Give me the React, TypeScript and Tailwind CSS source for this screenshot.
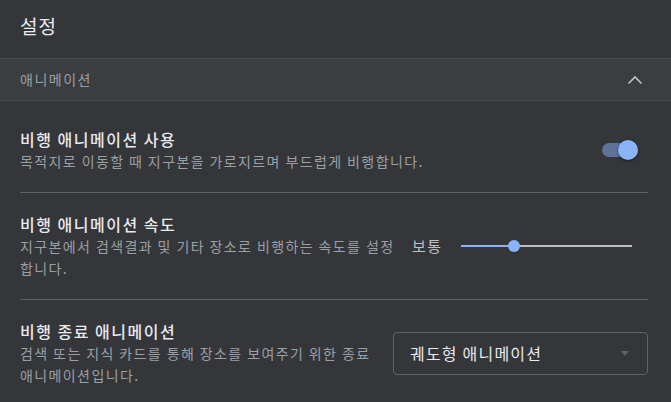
import React from "react";

// Chrome-like dark settings page: 애니메이션 section

const font = { fontFamily: '"Noto Sans CJK KR", "Noto Sans", sans-serif' };

function Toggle() {
  return (
    <div className="relative h-[20px] w-[36px] mr-[10px]">
      <div className="absolute left-0 top-[3px] h-[14px] w-[32px] rounded-full bg-[#5d7398]" />
      <div className="absolute right-0 top-0 h-[20px] w-[20px] rounded-full bg-[#8ab4f8] shadow-[0_1px_3px_rgba(0,0,0,0.5)]" />
    </div>
  );
}

function Slider() {
  return (
    <div className="relative h-[12px] w-[171px]">
      <div className="absolute left-0 right-0 top-[5px] h-[2px] bg-[#bdbdbd]" />
      <div className="absolute left-0 top-[5px] h-[2px] w-[53px] bg-[#8ab4f8]" />
      <div className="absolute left-[47px] top-0 h-[12px] w-[12px] rounded-full bg-[#8ab4f8]" />
    </div>
  );
}

const title = "text-[16px] font-medium leading-[22px] tracking-[1.5px] text-[#e8eaed]";
const desc = "text-[14px] leading-[22px] tracking-[1.4px] text-[#9aa0a6] break-keep";

export default function App() {
  return (
    <div className="h-[402px] w-[671px] overflow-hidden bg-[#35363a]" style={font}>
      {/* page title */}
      <div className="flex h-[58px] items-center px-[20px] pb-[6px]">
        <h1 className="text-[19px] tracking-[1px] text-[#e8eaed]">설정</h1>
      </div>

      {/* section header */}
      <div className="flex h-[43px] items-center justify-between border-y border-[#4a4b4f] bg-[#3c3d41] pl-[20px] pr-[28px]">
        <span className="text-[14px] tracking-[1.5px] text-[#9aa0a6]">애니메이션</span>
        <svg width="16" height="10" viewBox="0 0 16 10" fill="none">
          <path d="M1.5 8.5 L8 2 L14.5 8.5" stroke="#bdc1c6" strokeWidth="1.6" />
        </svg>
      </div>

      <div className="pl-[20px] pr-[23px] pt-[7px]">
        {/* row 1 */}
        <div className="flex items-center border-b border-[#5f6368] py-[20px]">
          <div className="flex-1">
            <div className={title}>비행 애니메이션 사용</div>
            <div className={desc}>목적지로 이동할 때 지구본을 가로지르며 부드럽게 비행합니다.</div>
          </div>
          <Toggle />
        </div>

        {/* row 2 */}
        <div className="flex items-center border-b border-[#5f6368] py-[20px]">
          <div className="w-[377px] shrink-0">
            <div className={title}>비행 애니메이션 속도</div>
            <div className={desc}>지구본에서 검색결과 및 기타 장소로 비행하는 속도를 설정 합니다.</div>
          </div>
          <div className="ml-[15px] flex items-center gap-[18px]">
            <span className="text-[15px] tracking-[1.5px] text-[#bdc1c6]">보통</span>
            <Slider />
          </div>
        </div>

        {/* row 3 */}
        <div className="flex items-center py-[20px]">
          <div className="w-[373px] shrink-0">
            <div className={title}>비행 종료 애니메이션</div>
            <div className={desc}>검색 또는 지식 카드를 통해 장소를 보여주기 위한 종료 애니메이션입니다.</div>
          </div>
          <div className="flex h-[43px] flex-1 items-center justify-between rounded-[4px] border border-[#5f6368] pl-[16px] pr-[18px]">
            <span className="text-[16px] tracking-[1.2px] text-[#e8eaed]">궤도형 애니메이션</span>
            <svg width="8" height="5" viewBox="0 0 8 5">
              <path d="M0 0 L8 0 L4 5 Z" fill="#5f6368" />
            </svg>
          </div>
        </div>
      </div>
    </div>
  );
}
